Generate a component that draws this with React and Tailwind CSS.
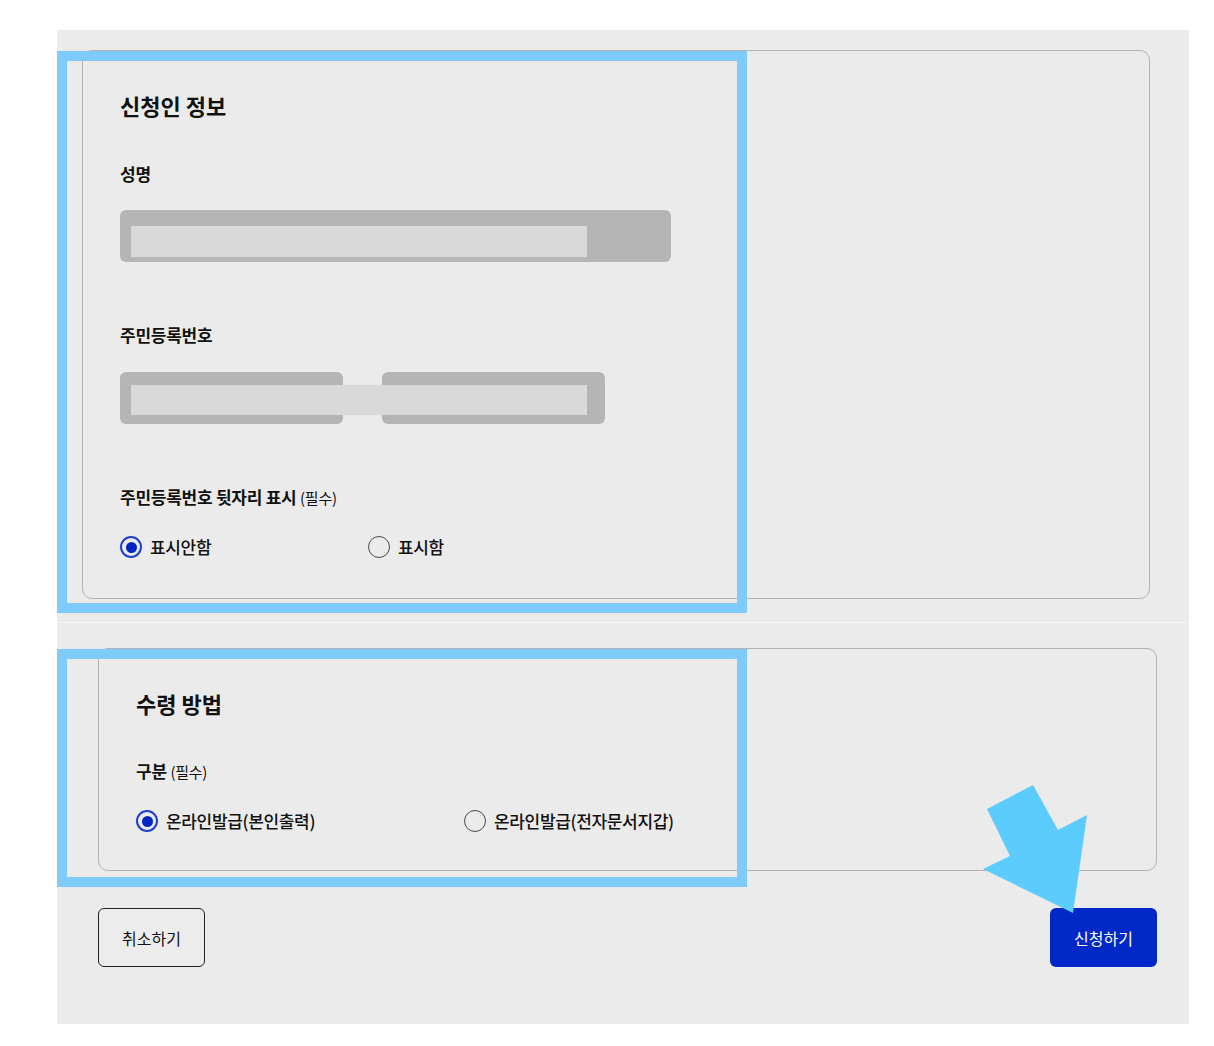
import React from "react";

const FONT = { fontFamily: '"Noto Sans CJK KR", "Noto Sans", sans-serif' };

function Radio({ checked, label }) {
  return (
    <div className="flex items-center gap-[8px] h-[24px]">
      {checked ? (
        <span className="flex items-center justify-center w-[22px] h-[22px] rounded-full border-[2px] border-[#1e3fd0]">
          <span className="w-[11px] h-[11px] rounded-full bg-[#0025c2]" />
        </span>
      ) : (
        <span className="w-[22px] h-[22px] rounded-full border border-[#4a4a4a]" />
      )}
      <span className="text-[17px] leading-[24px] font-medium text-[#111] tracking-[-0.02em]">{label}</span>
    </div>
  );
}

export default function App() {
  return (
    <div className="w-[1214px] h-[1046px] bg-white pt-[30px] pl-[57px]" style={FONT}>
      <div className="relative w-[1132px] h-[994px] bg-[#ebebeb] pt-[20px]">
        {/* Card 1 */}
        <div className="ml-[25px] w-[1068px] border border-[#b3b3b3] rounded-[10px] pl-[37px] pt-[39px] pb-[39px]">
          <h2 className="text-[22px] leading-[30px] font-bold text-[#111]">신청인 정보</h2>
          <div className="mt-[42px] text-[17px] leading-[24px] font-bold text-[#111] tracking-[-0.015em]">성명</div>
          <div className="mt-[24px] w-[551px] h-[52px] rounded-[6px] bg-[#b5b5b5] pt-[16px] pl-[11px]">
            <div className="w-[456px] h-[31px] bg-[#d9d9d9]" />
          </div>
          <div className="mt-[61px] text-[17px] leading-[24px] font-bold text-[#111] tracking-[-0.015em]">주민등록번호</div>
          <div className="relative mt-[25px] flex gap-[39px] h-[52px]">
            <div className="w-[223px] h-[52px] rounded-[6px] bg-[#b5b5b5]" />
            <div className="w-[223px] h-[52px] rounded-[6px] bg-[#b5b5b5]" />
            <div className="absolute left-[11px] top-[13px] w-[456px] h-[30px] bg-[#d9d9d9]" />
          </div>
          <div className="mt-[61px] text-[17px] leading-[24px] font-bold text-[#111] tracking-[-0.015em]">
            주민등록번호 뒷자리 표시 <span className="text-[15px] font-normal">(필수)</span>
          </div>
          <div className="mt-[25px] flex">
            <div className="w-[248px]">
              <Radio checked label="표시안함" />
            </div>
            <Radio label="표시함" />
          </div>
        </div>

        {/* separator line */}
        <div className="mt-[23px] h-px bg-[#f6f6f6]" />

        {/* Card 2 */}
        <div className="mt-[25px] ml-[41px] w-[1059px] border border-[#b3b3b3] rounded-[10px] pl-[37px] pt-[39px] pb-[37px]">
          <h2 className="text-[22px] leading-[30px] font-bold text-[#111]">수령 방법</h2>
          <div className="mt-[41px] text-[17px] leading-[24px] font-bold text-[#111] tracking-[-0.015em]">
            구분 <span className="text-[15px] font-normal">(필수)</span>
          </div>
          <div className="mt-[25px] flex">
            <div className="w-[328px]">
              <Radio checked label="온라인발급(본인출력)" />
            </div>
            <Radio label="온라인발급(전자문서지갑)" />
          </div>
        </div>

        {/* Buttons */}
        <div className="mt-[37px] ml-[41px] mr-[32px] flex justify-between">
          <button className="w-[107px] h-[59px] rounded-[6px] border border-[#222] bg-[#ececec] text-[16px] text-[#111]">
            취소하기
          </button>
          <button className="w-[107px] h-[59px] rounded-[6px] bg-[#0028c8] text-[16px] text-white">
            신청하기
          </button>
        </div>

        {/* Annotation overlays */}
        <div className="absolute left-0 top-[21px] w-[690px] h-[562px] border-[10px] border-[#7dcafb] pointer-events-none" />
        <div className="absolute left-0 top-[619px] w-[690px] h-[238px] border-[10px] border-[#7dcafb] pointer-events-none" />
        <svg
          className="absolute pointer-events-none"
          style={{ left: 0, top: 0 }}
          width="1132"
          height="994"
          viewBox="0 0 1132 994"
        >
          <polygon
            points="930,779 976,755 1001,800 1030,785 1016,883 926,839 953,826"
            fill="#5ccbfd"
          />
        </svg>
      </div>
    </div>
  );
}
